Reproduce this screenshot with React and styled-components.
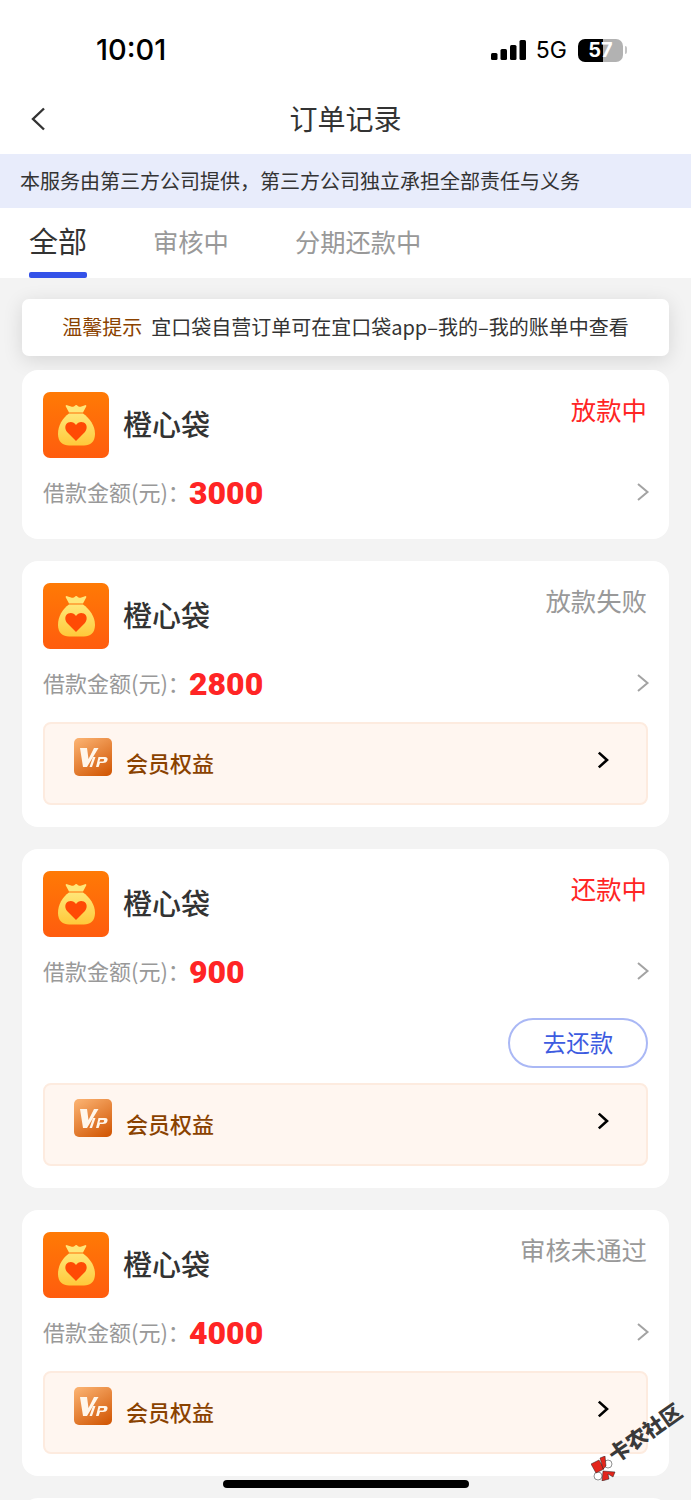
import styled, { createGlobalStyle } from "styled-components";

const GlobalStyle = createGlobalStyle`
  html, body {
    margin: 0;
    padding: 0;
    background: #f3f3f3;
  }
  body {
    font-family: "Noto Sans CJK SC", "Liberation Sans", sans-serif;
  }
`;

const orders = [
  { id: 1, status: "放款中", hot: true, amount: "3000", plain: true },
  { id: 2, status: "放款失败", amount: "2800" },
  { id: 3, status: "还款中", hot: true, amount: "900", repay: true },
  { id: 4, status: "审核未通过", amount: "4000" },
];

const BagIcon = () => (
  <svg width="66" height="66" viewBox="0 0 66 66">
    <defs>
      <linearGradient id="bagBg" x1="0" y1="0" x2="0" y2="1">
        <stop offset="0" stopColor="#ff7a05" />
        <stop offset="1" stopColor="#ff5c0e" />
      </linearGradient>
      <linearGradient id="bagBody" x1="0" y1="0" x2="0" y2="1">
        <stop offset="0" stopColor="#ffe678" />
        <stop offset="1" stopColor="#ffc93a" />
      </linearGradient>
    </defs>
    <rect width="66" height="66" rx="7" fill="url(#bagBg)" />
    <path d="M23.500 13c3 1 5 1.800 6.500 1.800 1.200 0 2-1.800 3.200-1.800s2 1.800 3.200 1.800c1.500 0 3.500-.8 6.100-1.800.8 0 1 .8.700 1.400l-3.200 6.100H26l-3.200-6.100c-.3-.6-.1-1.400.7-1.400z" fill="#ffe678" />
    <path d="M26 21.500h14c6.500 4.500 12 12 12 20.500 0 8-5 11.500-11 11.500H26C20 53.500 15 50 15 42c0-8.500 4.500-16 11-20.500z" fill="url(#bagBody)" />
    <path d="M33 49 L24.300 40.200c-2.900-3-2.600-7.800.9-9.600 2.900-1.400 6-.3 7.800 2.400 1.800-2.700 4.900-3.800 7.800-2.400 3.500 1.800 3.800 6.600.9 9.600z" fill="#ff4a05" />
  </svg>
);

const VipIcon = () => (
  <svg width="38" height="38" viewBox="0 0 38 38">
    <defs>
      <linearGradient id="vipBg" x1="0.2" y1="0" x2="0.8" y2="1">
        <stop offset="0" stopColor="#f9ae6c" />
        <stop offset="1" stopColor="#d35a08" />
      </linearGradient>
    </defs>
    <rect width="38" height="38" rx="5" fill="url(#vipBg)" />
    <path d="M6 10h7l1.500 11L20 10h4.500L13 29H9z" fill="#fff6ea" />
    <path
      fillRule="evenodd"
      d="M19 19h2.500L18 29h-2.500zM24.500 19H31c2.500 0 3 1.800 2.300 3.500-.7 1.800-2.300 2.500-4.300 2.500h-3l-1.400 4H22zm1.800 2-1 2.500h3.200c1.800 0 2.300-2.500.6-2.500z"
      fill="#fff6ea"
    />
  </svg>
);

const SmallArrow = () => (
  <svg width="14" height="20" viewBox="0 0 14 20">
    <path d="M2 2l9.500 8L2 18" fill="none" stroke="#a3a3a3" strokeWidth="2" />
  </svg>
);

const DarkArrow = () => (
  <svg width="12" height="18" viewBox="0 0 12 18">
    <path d="M1.800 1.600 10 9l-8.200 7.400" fill="none" stroke="#000" strokeWidth="2.600" />
  </svg>
);

const OrderCard = ({ order }) => (
  <Card $plain={order.plain}>
    <CardHead>
      <BagIcon />
      <ProductName>橙心袋</ProductName>
      <Status $hot={order.hot}>{order.status}</Status>
    </CardHead>
    <AmountRow>
      <AmountLabel>借款金额(元)：</AmountLabel>
      <Amount>{order.amount}</Amount>
      <RowArrow>
        <SmallArrow />
      </RowArrow>
    </AmountRow>
    {order.repay && (
      <ActionRow>
        <RepayButton>去还款</RepayButton>
      </ActionRow>
    )}
    {!order.plain && (
      <Benefit $tight={order.repay}>
        <VipWrap>
          <VipIcon />
        </VipWrap>
        <BenefitText>会员权益</BenefitText>
        <BenefitArrow>
          <DarkArrow />
        </BenefitArrow>
      </Benefit>
    )}
  </Card>
);

const App = () => {
  return (
    <Page>
      <GlobalStyle />
      <StatusBar>
        <Time>10:01</Time>
        <StatusRight>
          <svg width="35" height="20" viewBox="0 0 35 20">
            <rect x="0" y="13" width="6.500" height="7" rx="1.500" fill="#000" />
            <rect x="9.500" y="9" width="6.500" height="11" rx="1.500" fill="#000" />
            <rect x="19" y="5" width="6.500" height="15" rx="1.500" fill="#000" />
            <rect x="28.500" y="0" width="6.500" height="20" rx="1.500" fill="#000" />
          </svg>
          <Network>5G</Network>
          <Battery>57</Battery>
          <BatteryNub />
        </StatusRight>
      </StatusBar>
      <NavBar>
        <BackButton>
          <svg width="16" height="24" viewBox="0 0 16 24">
            <path d="M14 1.500 3 12l11 10.500" fill="none" stroke="#333" strokeWidth="2.400" />
          </svg>
        </BackButton>
        <Title>订单记录</Title>
      </NavBar>
      <Banner>本服务由第三方公司提供，第三方公司独立承担全部责任与义务</Banner>
      <Tabs>
        <Tab $active>全部</Tab>
        <Tab>审核中</Tab>
        <Tab>分期还款中</Tab>
      </Tabs>
      <Content>
        <Notice>
          <NoticeHead>温馨提示</NoticeHead>
          宜口袋自营订单可在宜口袋app–我的–我的账单中查看
        </Notice>
        <CardList>
          {orders.map((order) => (
            <OrderCard key={order.id} order={order} />
          ))}
          <Card $plain />
        </CardList>
      </Content>
      <Watermark>
        <WatermarkLogo width="25" height="25" viewBox="0 0 25 25">
          <g stroke="#222" strokeWidth="0.500">
            <circle cx="17" cy="8" r="4" fill="#fff" />
            <circle cx="7" cy="20" r="4" fill="#fff" />
            <path d="M0 8l8-4 5 9-8 4z" fill="#e3261c" />
            <path d="M9 2l5-2 1 10-3 3z" fill="#e3261c" />
            <path d="M12 15l12 1-2 5-5-3 1 5-7 2z" fill="#e3261c" />
          </g>
        </WatermarkLogo>
        <WatermarkText>卡农社区</WatermarkText>
      </Watermark>
      <HomeBar />
    </Page>
  );
};

const Page = styled.div`
  position: relative;
  width: 691px;
  height: 1500px;
  overflow: hidden;
  background: #f3f3f3;
`;

const StatusBar = styled.div`
  height: 90px;
  background: #fff;
  display: flex;
  align-items: center;
  justify-content: space-between;
  padding: 10px 64px 0 96px;
  box-sizing: border-box;
`;

const Time = styled.div`
  font-family: "Inter", "Liberation Sans", sans-serif;
  font-size: 29px;
  font-weight: 500;
  color: #000;
  line-height: 1;
  margin-top: -2px;
`;

const StatusRight = styled.div`
  display: flex;
  align-items: center;
`;

const Network = styled.div`
  font-family: "Inter", "Liberation Sans", sans-serif;
  font-size: 23px;
  color: #000;
  margin: 0 11px 0 10px;
  line-height: 1;
`;

const Battery = styled.div`
  width: 45px;
  height: 23px;
  border-radius: 7px;
  background: linear-gradient(90deg, #000 0 25px, #b2b2b2 25px);
  color: #fff;
  font-family: "Inter", "Liberation Sans", sans-serif;
  font-size: 20px;
  font-weight: 700;
  line-height: 23px;
  text-align: center;
`;

const BatteryNub = styled.div`
  width: 2px;
  height: 8px;
  margin-left: 2px;
  border-radius: 0 2px 2px 0;
  background: #c4c4c4;
`;

const NavBar = styled.div`
  position: relative;
  height: 64px;
  background: #fff;
  display: flex;
  align-items: center;
  justify-content: center;
`;

const BackButton = styled.div`
  position: absolute;
  left: 30px;
  top: 17px;
  line-height: 0;
`;

const Title = styled.div`
  font-size: 28px;
  color: #333;
  line-height: 1;
  margin-top: -8px;
`;

const Banner = styled.div`
  height: 54px;
  background: #e8ecfb;
  color: #333;
  font-size: 20px;
  line-height: 54px;
  padding-left: 20px;
  white-space: nowrap;
`;

const Tabs = styled.div`
  height: 70px;
  background: #fff;
  display: flex;
  align-items: stretch;
  gap: 66px;
  padding-left: 29px;
`;

const Tab = styled.div`
  position: relative;
  font-size: ${(p) => (p.$active ? "29px" : "25.3px")};
  color: ${(p) => (p.$active ? "#333" : "#999")};
  line-height: 66px;
  margin-top: ${(p) => (p.$active ? "-1px" : "0")};

  &::after {
    content: "";
    display: ${(p) => (p.$active ? "block" : "none")};
    position: absolute;
    left: 0;
    right: 0;
    bottom: 0;
    height: 6px;
    border-radius: 2px;
    background: #3452e8;
  }
`;

const Content = styled.div`
  padding: 21px 22px 0;
`;

const Notice = styled.div`
  height: 57px;
  background: #fff;
  border-radius: 7px;
  box-shadow: 0 4px 20px rgba(0, 0, 0, 0.12);
  font-size: 20px;
  line-height: 55px;
  color: #333;
  text-align: center;
  white-space: nowrap;
`;

const NoticeHead = styled.span`
  color: #8a4200;
  margin-right: 9px;
`;

const CardList = styled.div`
  display: flex;
  flex-direction: column;
  gap: 22px;
  margin-top: 14px;
`;

const Card = styled.div`
  background: #fff;
  border-radius: 16px;
  padding: 22px 21px ${(p) => (p.$plain ? "27px" : "22px")};
`;

const CardHead = styled.div`
  display: flex;
  align-items: flex-start;
  height: 66px;
`;

const ProductName = styled.div`
  font-size: 29px;
  font-weight: 500;
  color: #333;
  line-height: 62px;
  margin-left: 14px;
`;

const Status = styled.div`
  margin-left: auto;
  margin-right: 1px;
  margin-top: -3px;
  font-size: 25.4px;
  line-height: 40px;
  color: ${(p) => (p.$hot ? "#ff2525" : "#999")};
`;

const AmountRow = styled.div`
  display: flex;
  align-items: center;
  height: 40px;
  margin-top: 14px;
`;

const AmountLabel = styled.div`
  font-size: 22px;
  line-height: 38px;
  height: 40px;
  color: #999;
  width: 146px;
  white-space: nowrap;
`;

const Amount = styled.div`
  font-family: "Roboto", "Liberation Sans", sans-serif;
  font-size: 32px;
  font-weight: 900;
  color: #ff2525;
  margin-top: 1px;
`;

const RowArrow = styled.div`
  margin-left: auto;
  margin-right: -2px;
  line-height: 0;
`;

const ActionRow = styled.div`
  display: flex;
  justify-content: flex-end;
  margin-top: 27px;
`;

const RepayButton = styled.div`
  box-sizing: border-box;
  width: 140px;
  height: 50px;
  border: 2px solid #aab8f5;
  border-radius: 25px;
  color: #3d5be0;
  font-size: 23.5px;
  line-height: 44px;
  text-align: center;
`;

const Benefit = styled.div`
  box-sizing: border-box;
  height: 83px;
  margin-top: ${(p) => (p.$tight ? "15px" : "19px")};
  display: flex;
  align-items: flex-start;
  background: #fff6f0;
  border: 2px solid #fdebdf;
  border-radius: 8px;
  padding: 14px 37px 0 29px;
`;

const VipWrap = styled.div`
  line-height: 0;
`;

const BenefitText = styled.div`
  font-size: 22px;
  font-weight: 500;
  color: #8a4200;
  margin-left: 14px;
  line-height: 48px;
`;

const BenefitArrow = styled.div`
  margin-left: auto;
  margin-top: 13px;
  line-height: 0;
`;

const Watermark = styled.div`
  position: absolute;
  left: 597px;
  top: 1456px;
  display: flex;
  align-items: center;
  transform: rotate(-35deg);
  transform-origin: left bottom;
`;

const WatermarkLogo = styled.svg`
  transform: translate(0, 6px) rotate(35deg);
  flex: none;
`;

const WatermarkText = styled.div`
  font-size: 21px;
  font-weight: 900;
  color: #3a3a3a;
  white-space: nowrap;
  line-height: 1;
`;

const HomeBar = styled.div`
  position: absolute;
  left: 223px;
  bottom: 12px;
  width: 246px;
  height: 8px;
  border-radius: 4px;
  background: #000;
`;

export default App;
